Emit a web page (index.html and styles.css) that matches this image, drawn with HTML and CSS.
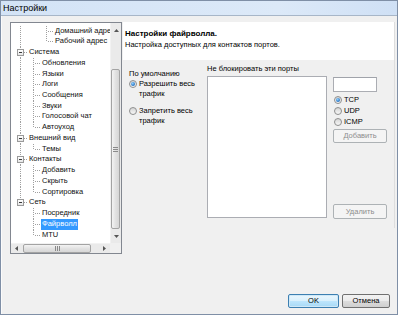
FILE: index.html
```html
<!DOCTYPE html>
<html>
<head>
<meta charset="utf-8">
<link rel="stylesheet" href="styles.css">
</head>
<body>
<div class="window">
  <div class="titlebar">Настройки</div>
  <div class="client">
    <div class="main">
      <div class="tree">
        <div class="tree-items">
          <div class="row"><span class="g v"></span><span class="g"></span><span class="g t"></span><span class="lbl">Домашний адрес</span></div>
          <div class="row"><span class="g v"></span><span class="g"></span><span class="g l"></span><span class="lbl">Рабочий адрес</span></div>
          <div class="row"><span class="g bx mid"><span class="box"></span></span><span class="lbl">Система</span></div>
          <div class="row"><span class="g v"></span><span class="g t"></span><span class="lbl">Обновления</span></div>
          <div class="row"><span class="g v"></span><span class="g t"></span><span class="lbl">Языки</span></div>
          <div class="row"><span class="g v"></span><span class="g t"></span><span class="lbl">Логи</span></div>
          <div class="row"><span class="g v"></span><span class="g t"></span><span class="lbl">Сообщения</span></div>
          <div class="row"><span class="g v"></span><span class="g t"></span><span class="lbl">Звуки</span></div>
          <div class="row"><span class="g v"></span><span class="g t"></span><span class="lbl">Голосовой чат</span></div>
          <div class="row"><span class="g v"></span><span class="g l"></span><span class="lbl">Автоуход</span></div>
          <div class="row"><span class="g bx mid"><span class="box"></span></span><span class="lbl">Внешний вид</span></div>
          <div class="row"><span class="g v"></span><span class="g l"></span><span class="lbl">Темы</span></div>
          <div class="row"><span class="g bx mid"><span class="box"></span></span><span class="lbl">Контакты</span></div>
          <div class="row"><span class="g v"></span><span class="g t"></span><span class="lbl">Добавить</span></div>
          <div class="row"><span class="g v"></span><span class="g t"></span><span class="lbl">Скрыть</span></div>
          <div class="row"><span class="g v"></span><span class="g l"></span><span class="lbl">Сортировка</span></div>
          <div class="row"><span class="g bx last"><span class="box"></span></span><span class="lbl">Сеть</span></div>
          <div class="row"><span class="g"></span><span class="g t"></span><span class="lbl">Посредник</span></div>
          <div class="row"><span class="g"></span><span class="g t"></span><span class="lbl sel">Файрволл</span></div>
          <div class="row"><span class="g"></span><span class="g l"></span><span class="lbl">MTU</span></div>
        </div>
        <div class="vscroll">
          <div class="sarrow"><svg width="5" height="3" viewBox="0 0 5 3"><path d="M0 3 L2.5 0 L5 3 Z" fill="#555"/></svg></div>
          <div class="vtrack"><div class="vthumb"><svg width="5" height="5" viewBox="0 0 5 5"><path d="M0 0.5H5M0 2.5H5M0 4.5H5" stroke="#8a8a8a" stroke-width="1"/></svg></div></div>
          <div class="sarrow"><svg width="5" height="3" viewBox="0 0 5 3"><path d="M0 0 L2.5 3 L5 0 Z" fill="#555"/></svg></div>
        </div>
        <div class="hscroll">
          <div class="harrow"><svg width="3" height="5" viewBox="0 0 3 5"><path d="M3 0 L0 2.5 L3 5 Z" fill="#555"/></svg></div>
          <div class="htrack"><div class="hthumb"><svg width="5" height="5" viewBox="0 0 5 5"><path d="M0.5 0V5M2.5 0V5M4.5 0V5" stroke="#8a8a8a" stroke-width="1"/></svg></div></div>
          <div class="harrow"><svg width="3" height="5" viewBox="0 0 3 5"><path d="M0 0 L3 2.5 L0 5 Z" fill="#555"/></svg></div>
        </div>
        <div class="corner"></div>
      </div>
      <div class="page">
        <div class="page-head">
          <div class="ph-title">Настройки файрволла.</div>
          <div class="ph-sub">Настройка доступных для контактов портов.</div>
        </div>
        <div class="page-body">
          <div class="col-default">
            <div class="cap">По умолчанию</div>
            <div class="radio-row"><span class="radio on"></span><span class="rtext">Разрешить весь<br>трафик</span></div>
            <div class="radio-row second"><span class="radio"></span><span class="rtext">Запретить весь<br>трафик</span></div>
          </div>
          <div class="col-list">
            <div class="cap">Не блокировать эти порты</div>
            <div class="listbox"></div>
          </div>
          <div class="col-side">
            <div class="input"></div>
            <div class="radio-row small first"><span class="radio on"></span><span class="rtext">TCP</span></div>
            <div class="radio-row small"><span class="radio"></span><span class="rtext">UDP</span></div>
            <div class="radio-row small"><span class="radio"></span><span class="rtext">ICMP</span></div>
            <div class="btn disabled add">Добавить</div>
            <div class="btn disabled del">Удалить</div>
          </div>
        </div>
      </div>
    </div>
    <div class="buttons">
      <div class="btn default ok">OK</div>
      <div class="btn cancel">Отмена</div>
    </div>
  </div>
</div>
</body>
</html>
```
FILE: styles.css
```css
* { box-sizing: border-box; }
html, body { margin: 0; padding: 0; background: #fff; }
body {
  font-family: "Liberation Sans", Arial, sans-serif;
  font-size: 7.5px;
  color: #000;
  width: 400px;
  height: 316px;
  overflow: hidden;
}
.window {
  width: 398px;
  height: 315px;
  border: 1px solid #7f8fa6;
  background: #f0f0f0;
  display: flex;
  flex-direction: column;
}
.titlebar {
  height: 15px;
  flex: none;
  background: linear-gradient(to right, #d3e3f6, #dce9f8 70%, #cfe0f5);
  border-bottom: 1px solid #a7b6c8;
  font-size: 9px;
  line-height: 14px;
  padding-left: 2px;
}
.client {
  flex: 1;
  display: flex;
  flex-direction: column;
  padding: 6px 4px 6px 8px;
  border-left: 1px solid #fbfbfb;
}
.main {
  display: flex;
  gap: 1px;
  align-items: flex-start;
}

/* tree */
.tree {
  width: 112px;
  height: 232px;
  flex: none;
  border: 1px solid #828790;
  background: #fff;
  display: grid;
  grid-template-columns: 1fr 11px;
  grid-template-rows: 1fr 10px;
  overflow: hidden;
}
.tree-items {
  overflow: hidden;
  padding: 2.6px 0 0 3px;
  white-space: nowrap;
}
.row {
  height: 10.74px;
  display: flex;
  align-items: stretch;
}
.g {
  width: 13px;
  flex: none;
  display: flex;
  align-items: center;
  justify-content: center;
}
.g.v {
  background: repeating-linear-gradient(to bottom, #a0a0a0 0 1px, transparent 1px 2px) 6px 0 / 1px 100% no-repeat;
}
.g.t {
  background:
    repeating-linear-gradient(to bottom, #a0a0a0 0 1px, transparent 1px 2px) 6px 0 / 1px 100% no-repeat,
    repeating-linear-gradient(to right, #a0a0a0 0 1px, transparent 1px 2px) 8px 5px / 5px 1px no-repeat;
}
.g.l {
  background:
    repeating-linear-gradient(to bottom, #a0a0a0 0 1px, transparent 1px 2px) 6px 0 / 1px 6px no-repeat,
    repeating-linear-gradient(to right, #a0a0a0 0 1px, transparent 1px 2px) 8px 5px / 5px 1px no-repeat;
}
.g.bx.mid {
  background:
    repeating-linear-gradient(to bottom, #a0a0a0 0 1px, transparent 1px 2px) 6px 0 / 1px 100% no-repeat,
    repeating-linear-gradient(to right, #a0a0a0 0 1px, transparent 1px 2px) 10px 5px / 3px 1px no-repeat;
}
.g.bx.last {
  background:
    repeating-linear-gradient(to bottom, #a0a0a0 0 1px, transparent 1px 2px) 6px 0 / 1px 5px no-repeat,
    repeating-linear-gradient(to right, #a0a0a0 0 1px, transparent 1px 2px) 10px 5px / 3px 1px no-repeat;
}
.box {
  width: 7px;
  height: 7px;
  border: 1px solid #9a9a9a;
  display: block;
  background: linear-gradient(#fff, #e6e6e6);
}
.box::after {
  content: "";
  display: block;
  margin: 2px 1px 0;
  height: 1px;
  background: #3a3a3a;
}
.lbl {
  line-height: 10.74px;
  padding: 0 1px;
  margin-left: 1px;
  color: #111;
}
.lbl.sel {
  background: #3399ff;
  color: #fff;
}

.vscroll {
  display: flex;
  flex-direction: column;
  background: #eaeaea;
  border-left: 1px solid #f2f2f2;
}
.sarrow {
  height: 14px;
  flex: none;
  display: flex;
  align-items: center;
  justify-content: center;
}
.vtrack {
  flex: 1;
  padding-top: 32px;
  display: flex;
  flex-direction: column;
}
.vthumb {
  flex: 1;
  margin: 0 1px 0 0;
  border: 1px solid #a3a3a3;
  border-radius: 2px;
  background: linear-gradient(to right, #f3f3f3, #e2e2e2 50%, #d6d6d6);
  display: flex;
  align-items: center;
  justify-content: center;
}
.hscroll {
  display: flex;
  background: #eaeaea;
  border-top: 1px solid #f2f2f2;
}
.harrow {
  width: 11px;
  flex: none;
  display: flex;
  align-items: center;
  justify-content: center;
}
.htrack {
  flex: 1;
  padding-left: 1px;
  display: flex;
}
.hthumb {
  width: 68px;
  border: 1px solid #a3a3a3;
  border-radius: 2px;
  background: linear-gradient(#f3f3f3, #e2e2e2 50%, #d6d6d6);
  display: flex;
  align-items: center;
  justify-content: center;
}
.corner { background: #f0f0f0; }

/* page */
.page {
  width: 272px;
  height: 206px;
  flex: none;
  display: flex;
  flex-direction: column;
  border-right: 1px solid #dedede;
}
.page-head {
  height: 38px;
  background: #fff;
  padding: 6px 0 0 2px;
  line-height: 11px;
}
.ph-title { font-weight: bold; font-size: 8px; }
.page-body {
  display: flex;
  padding: 4px 0 0 6px;
}
.cap { line-height: 10px; white-space: nowrap; }
.col-default {
  width: 72px;
  margin-top: 5px;
  margin-right: 6px;
}
.radio-row {
  display: flex;
  align-items: flex-start;
  line-height: 10px;
}
.radio-row.second { margin-top: 7px; }
.radio {
  width: 8px;
  height: 8px;
  flex: none;
  margin: 1px 2px 0 0;
  border-radius: 50%;
  border: 1px solid #8e8f8f;
  background: linear-gradient(#d6d6d6, #f7f7f7);
  display: flex;
  align-items: center;
  justify-content: center;
}
.radio.on::after {
  content: "";
  width: 4px;
  height: 4px;
  border-radius: 50%;
  background: radial-gradient(circle at 40% 35%, #8fd0ff, #1f6cbd 75%);
}
.rtext { white-space: nowrap; }
.col-list {
  width: 120px;
  margin-right: 6px;
}
.listbox {
  margin-top: 2px;
  height: 142px;
  border: 1px solid #abadb3;
  background: #fff;
}
.col-side {
  width: 54px;
}
.input {
  margin-top: 13px;
  width: 44px;
  height: 15px;
  border: 1px solid #abadb3;
  border-top-color: #a0a3aa;
  background: #fff;
}
.radio-row.small { height: 11px; line-height: 10px; }
.radio-row.small.first { margin-top: 3px; }
.radio-row.small .radio { margin-left: 1px; margin-top: 1px; }

.btn {
  height: 14px;
  border: 1px solid #707070;
  border-radius: 2px;
  background: linear-gradient(#f2f2f2, #ebebeb 50%, #dddddd 50%, #cfcfcf);
  text-align: center;
  line-height: 12px;
  color: #000;
}
.btn.disabled {
  border-color: #adb2b5;
  background: #f4f4f4;
  color: #8d8d8d;
}
.btn.add { margin-top: 1px; width: 54px; }
.btn.del { margin-top: 61px; width: 54px; height: 15px; line-height: 13px; }

.buttons {
  margin-top: auto;
  display: flex;
  justify-content: flex-end;
  gap: 3px;
  padding-right: 3px;
}
.btn.ok {
  width: 51px;
  border-color: #3c7fb1;
  background: linear-gradient(#eaf6fd, #d9f0fc 50%, #bee6fd 50%, #a7d9f5);
  box-shadow: inset 0 0 0 1px #cfe8f7;
}
.btn.cancel { width: 48px; }
```
